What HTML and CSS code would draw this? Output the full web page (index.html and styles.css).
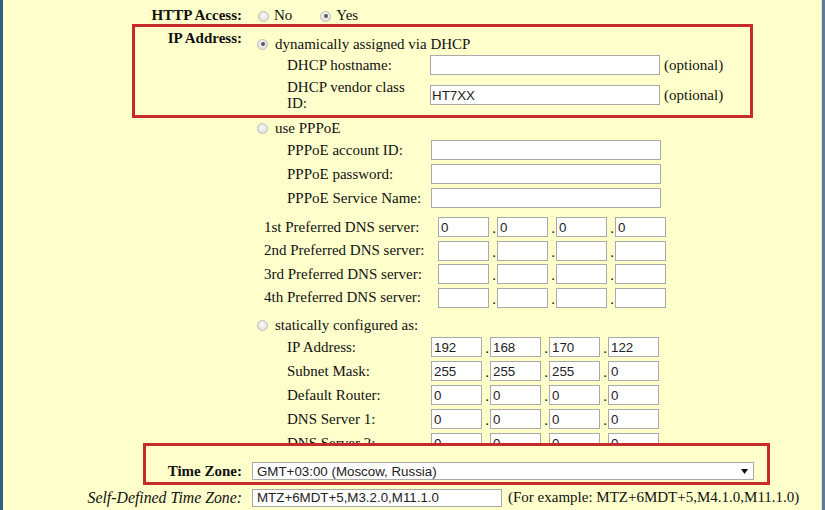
FILE: index.html
```html
<!DOCTYPE html>
<html>
<head>
<meta charset="utf-8">
<link rel="stylesheet" href="styles.css">
</head>
<body>
<div class="page">
  <div class="row http">
    <div class="lab b">HTTP Access:</div>
    <div class="choices">
      <span class="radio"></span><span class="ch no">No</span>
      <span class="radio on"></span><span class="ch">Yes</span>
    </div>
  </div>

  <div class="row ip">
    <div class="lab b ip-lab">IP Address:</div>
    <div class="val">
      <div class="opt first"><span class="radio on"></span>dynamically assigned via DHCP</div>
      <div class="fields">
        <div class="field"><span class="fl">DHCP hostname:</span><input class="txt" type="text"><span class="note">(optional)</span></div>
        <div class="field tall"><span class="fl">DHCP vendor class ID:</span><input class="txt" type="text" value="HT7XX"><span class="note">(optional)</span></div>
      </div>

      <div class="opt second"><span class="radio"></span>use PPPoE</div>
      <div class="fields pppoe">
        <div class="field"><span class="fl">PPPoE account ID:</span><input class="txt" type="text"></div>
        <div class="field"><span class="fl">PPPoE password:</span><input class="txt" type="text"></div>
        <div class="field"><span class="fl">PPPoE Service Name:</span><input class="txt" type="text"></div>
      </div>

      <div class="dns">
        <div class="quad"><span class="dl">1st Preferred DNS server:</span><input class="oct" value="0"><span class="dot">.</span><input class="oct" value="0"><span class="dot">.</span><input class="oct" value="0"><span class="dot">.</span><input class="oct" value="0"></div>
        <div class="quad"><span class="dl">2nd Preferred DNS server:</span><input class="oct"><span class="dot">.</span><input class="oct"><span class="dot">.</span><input class="oct"><span class="dot">.</span><input class="oct"></div>
        <div class="quad"><span class="dl">3rd Preferred DNS server:</span><input class="oct"><span class="dot">.</span><input class="oct"><span class="dot">.</span><input class="oct"><span class="dot">.</span><input class="oct"></div>
        <div class="quad"><span class="dl">4th Preferred DNS server:</span><input class="oct"><span class="dot">.</span><input class="oct"><span class="dot">.</span><input class="oct"><span class="dot">.</span><input class="oct"></div>
      </div>

      <div class="opt third"><span class="radio"></span>statically configured as:</div>
      <div class="fields static">
        <div class="quad"><span class="fl">IP Address:</span><input class="oct" value="192"><span class="dot">.</span><input class="oct" value="168"><span class="dot">.</span><input class="oct" value="170"><span class="dot">.</span><input class="oct" value="122"></div>
        <div class="quad"><span class="fl">Subnet Mask:</span><input class="oct" value="255"><span class="dot">.</span><input class="oct" value="255"><span class="dot">.</span><input class="oct" value="255"><span class="dot">.</span><input class="oct" value="0"></div>
        <div class="quad"><span class="fl">Default Router:</span><input class="oct" value="0"><span class="dot">.</span><input class="oct" value="0"><span class="dot">.</span><input class="oct" value="0"><span class="dot">.</span><input class="oct" value="0"></div>
        <div class="quad"><span class="fl">DNS Server 1:</span><input class="oct" value="0"><span class="dot">.</span><input class="oct" value="0"><span class="dot">.</span><input class="oct" value="0"><span class="dot">.</span><input class="oct" value="0"></div>
        <div class="quad"><span class="fl">DNS Server 2:</span><input class="oct" value="0"><span class="dot">.</span><input class="oct" value="0"><span class="dot">.</span><input class="oct" value="0"><span class="dot">.</span><input class="oct" value="0"></div>
      </div>
    </div>
  </div>

  <div class="row tz">
    <div class="lab b tz-lab">Time Zone:</div>
    <div class="selwrap">
      <select class="sel"><option>GMT+03:00 (Moscow, Russia)</option></select>
      <svg class="arrow" width="7" height="5" viewBox="0 0 7 5"><path d="M0 0H7L3.5 5Z" fill="#111"/></svg>
    </div>
  </div>

  <div class="row sd">
    <div class="lab it">Self-Defined Time Zone:</div>
    <input class="txt sdin" type="text" value="MTZ+6MDT+5,M3.2.0,M11.1.0">
    <span class="example">(For example: MTZ+6MDT+5,M4.1.0,M11.1.0)</span>
  </div>

  <div class="mark"></div>
</div>
</body>
</html>
```

FILE: styles.css
```css
* { box-sizing: border-box; }
html, body { margin: 0; padding: 0; background: #ffffcc; }
body {
  font-family: "Liberation Serif", "Times New Roman", serif;
  font-size: 15px;
  color: #111;
}
.page {
  position: relative;
  width: 825px;
  height: 510px;
  overflow: hidden;
  background: #ffffcc;
  border-left: 3px solid #2d5f82;
  border-right: 3px solid #5d7c99;
  box-shadow: inset -1px 0 0 #e4e8c6;
}
.row { display: flex; align-items: center; }
.lab { width: 239px; flex: none; text-align: right; line-height: 17px; }
.b { font-weight: bold; }
.it { font-style: italic; font-size: 15.8px; }

.radio {
  display: inline-block;
  width: 11px;
  height: 11px;
  border-radius: 50%;
  border: 1px solid #bdbdbd;
  background: radial-gradient(circle at 50% 40%, #fafafa 0, #e2e2e2 70%, #d0d0d0 100%);
  flex: none;
  position: relative;
}
.radio.on::after {
  content: "";
  position: absolute;
  left: 2.5px; top: 2.5px;
  width: 4px; height: 4px;
  border-radius: 50%;
  background: #5a5a5a;
}

/* HTTP row */
.http { padding-top: 6px; height: 24px; }
.choices { display: flex; flex-direction: row; align-items: center; margin-left: 16px; line-height: 17px; }
.choices .radio { margin-right: 5px; margin-top: 2px; }
.ch.no { margin-right: 28px; }

/* IP section */
.ip { align-items: flex-start; }
.ip-lab { margin-top: 6px; }
.val { margin-left: 15px; display: flex; flex-direction: column; }
.opt { display: flex; align-items: center; line-height: 17px; height: 17px; }
.opt .radio { margin-right: 7px; }
.opt.first { margin-top: 11.5px; }
.opt.second { margin-top: 9px; }
.opt.third { margin-top: 9.5px; }

.fields { padding-left: 30px; display: flex; flex-direction: column; gap: 4px; margin-top: 2.5px; }
.field { display: flex; align-items: center; height: 20px; }
.field.tall { height: 32px; }
.fl { width: 140px; flex: none; line-height: 16px; }
.txt {
  font-family: "Liberation Sans", Arial, sans-serif;
  font-size: 13.33px;
  color: #222;
  height: 20px;
  width: 230px;
  margin: 0 0 0 3px;
  padding: 0 1px;
  border: 1px solid #aaaaaa;
  background: #fff;
  outline: none;
}
.note { margin-left: 4px; }
.pppoe { margin-top: 3px; }
.pppoe .txt { margin-left: 4px; }

.dns { margin-top: 9px; padding-left: 7px; display: flex; flex-direction: column; gap: 3.5px; }
.quad { display: flex; align-items: center; height: 20px; }
.dl { width: 170px; flex: none; }
.dl + .oct { margin-left: 4px; }
.oct {
  font-family: "Liberation Sans", Arial, sans-serif;
  font-size: 13.33px;
  color: #222;
  width: 51px;
  height: 20px;
  margin: 0;
  padding: 0 2px;
  border: 1px solid #aaaaaa;
  background: #fff;
  outline: none;
}
.dot { width: 8px; height: 20px; line-height: 20px; text-align: right; padding-right: 1px; padding-top: 1px; flex: none; }

.static { margin-top: 3px; gap: 4px; }
.static .fl + .oct { margin-left: 4px; }

/* Time zone annotated row */
.tz {
  position: relative;
  z-index: 2;
  margin-top: -10px;
  margin-left: 140px;
  width: 627px;
  height: 42px;
  border: 3px solid #c72a2b;
  background: #ffffcc;
  align-items: flex-end;
  padding-bottom: 2px;
}
.tz-lab { width: 96px; }
.selwrap { position: relative; margin-left: 10px; width: 502px; height: 18px; }
.sel {
  appearance: none;
  -webkit-appearance: none;
  width: 100%;
  height: 18px;
  margin: 0;
  padding: 0 0 0 4px;
  border: 1px solid #aaaaaa;
  border-radius: 0;
  background: #fff;
  font-family: "Liberation Sans", Arial, sans-serif;
  font-size: 13.33px;
  color: #222;
  outline: none;
}
.arrow { position: absolute; right: 6px; top: 7px; }

.sd { margin-top: 3.5px; height: 18px; }
.sdin { width: 250px; height: 18px; margin-left: 10px; padding-left: 4px; }
.example { margin-left: 6px; white-space: nowrap; }

/* annotation frame */
.mark {
  position: absolute;
  left: 129px;
  top: 24px;
  width: 621px;
  height: 94px;
  border: 3px solid #c72a2b;
  pointer-events: none;
}
```
